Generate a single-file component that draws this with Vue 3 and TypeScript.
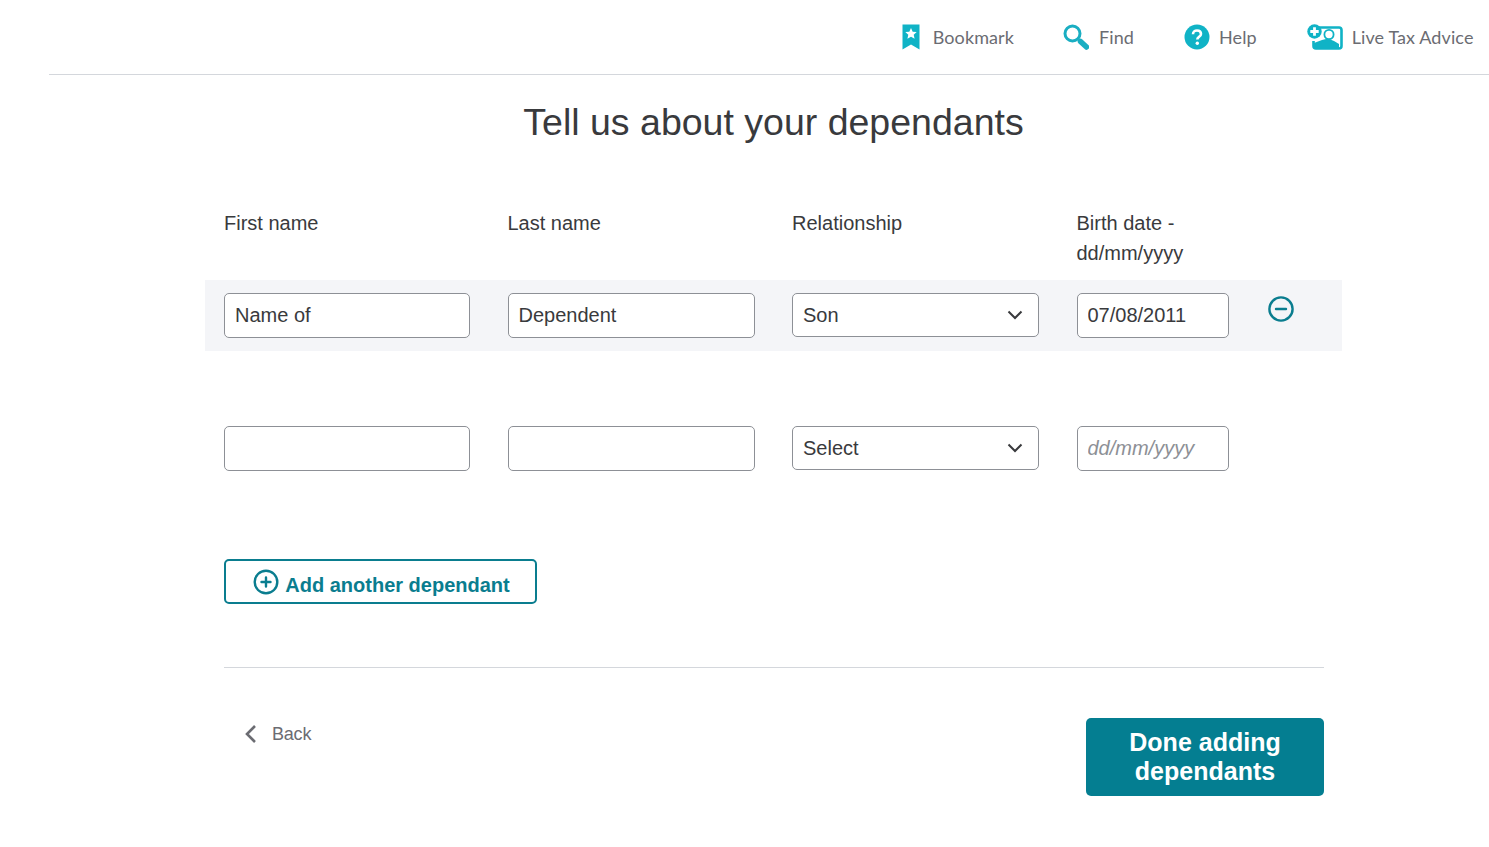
<script setup lang="ts">
import { ref } from 'vue'

const navItems = [
  { key: 'bookmark', label: 'Bookmark' },
  { key: 'find', label: 'Find' },
  { key: 'help', label: 'Help' },
  { key: 'live', label: 'Live Tax Advice' },
]

const relationships = ['Select', 'Son', 'Daughter', 'Other']

const dependants = ref([
  { first: 'Name of', last: 'Dependent', relationship: 'Son', birth: '07/08/2011' },
  { first: '', last: '', relationship: 'Select', birth: '' },
])
</script>

<template>
  <div class="page">
    <header class="topbar">
      <a v-for="item in navItems" :key="item.key" class="nav-item" :class="`nav-item--${item.key}`">
        <svg v-if="item.key === 'bookmark'" width="18" height="26" viewBox="0 0 18 26">
          <path d="M0.500 0.500h17v25l-8.500-5l-8.500 5z" fill="#10b3c6" />
          <path d="M9 4l1.700 3.700 4 .4-3 2.700.9 4L9 12.800l-3.600 2 .9-4-3-2.700 4-.4z" fill="#fff" />
        </svg>
        <svg v-else-if="item.key === 'find'" width="26" height="26" viewBox="0 0 26 26">
          <circle cx="9.500" cy="9.500" r="7.500" fill="none" stroke="#1aaec2" stroke-width="3" />
          <path d="M15.500 15.500l2 2" stroke="#1aaec2" stroke-width="3" />
          <path d="M17.500 17.500l6 5.500" stroke="#1aaec2" stroke-width="5.500" stroke-linecap="round" />
        </svg>
        <svg v-else-if="item.key === 'help'" width="26" height="26" viewBox="0 0 26 26">
          <circle cx="13" cy="13" r="12.500" fill="#10b3c6" />
          <path d="M9 10.200c0-2.300 1.800-3.700 4-3.700s4 1.300 4 3.400c0 2.900-3.700 2.900-3.700 5.600" fill="none" stroke="#fff" stroke-width="2.600" />
          <circle cx="13.300" cy="19.300" r="1.700" fill="#fff" />
        </svg>
        <svg v-else width="36" height="26" viewBox="0 0 36 26">
          <path d="M12 3.500h20a2.500 2.500 0 0 1 2.500 2.500v16a2.500 2.500 0 0 1-2.500 2.500H9a2.500 2.500 0 0 1-2.500-2.500v-5" fill="none" stroke="#10b3c6" stroke-width="2.600" />
          <path d="M7 25v-6l8-3 4-1h3l5 2 5 3v5z" fill="#10b3c6" />
          <circle cx="22" cy="10.500" r="4.600" fill="#fff" stroke="#10b3c6" stroke-width="1.800" />
          <circle cx="7.500" cy="7.500" r="7.200" fill="#10b3c6" />
          <path d="M7.500 3.300v8.400M3.300 7.500h8.400" stroke="#fff" stroke-width="2.800" />
        </svg>
        <span>{{ item.label }}</span>
      </a>
    </header>

    <main class="content">
      <h1 class="title">Tell us about your dependants</h1>

      <div class="columns labels">
        <span>First name</span>
        <span>Last name</span>
        <span>Relationship</span>
        <span>Birth date - dd/mm/yyyy</span>
      </div>

      <div
        v-for="(dep, i) in dependants"
        :key="i"
        class="columns dep-row"
        :class="{ 'dep-row--filled': i === 0 }"
      >
        <input v-model="dep.first" class="field" type="text" />
        <input v-model="dep.last" class="field" type="text" />
        <div class="select-wrap">
          <select v-model="dep.relationship" class="field field--select">
            <option v-for="r in relationships" :key="r" :value="r">{{ r }}</option>
          </select>
          <svg class="chevron" width="16" height="10" viewBox="0 0 16 10">
            <path d="M1.500 1.500L8 8l6.500-6.500" fill="none" stroke="#393a3d" stroke-width="2" />
          </svg>
        </div>
        <input v-model="dep.birth" class="field" type="text" placeholder="dd/mm/yyyy" />
        <button v-if="i === 0" class="remove" type="button" aria-label="Remove dependant">
          <svg width="26" height="26" viewBox="0 0 26 26">
            <circle cx="13" cy="13" r="11.600" fill="none" stroke="#0a7d8f" stroke-width="2.400" />
            <path d="M8 13h10" stroke="#0a7d8f" stroke-width="2.400" stroke-linecap="round" />
          </svg>
        </button>
      </div>

      <div class="inner">
        <button class="add" type="button">
          <svg width="26" height="26" viewBox="0 0 26 26">
            <circle cx="13" cy="13" r="11.300" fill="none" stroke="#0a7d8f" stroke-width="2.400" />
            <path d="M8.500 13h9M13 8.500v9" stroke="#0a7d8f" stroke-width="2.400" stroke-linecap="round" />
          </svg>
          <span>Add another dependant</span>
        </button>

        <div class="footer">
          <a class="back">
            <svg width="13" height="20" viewBox="0 0 13 20">
              <path d="M11 2L3 10l8 8" fill="none" stroke="#6b6c72" stroke-width="2.600" />
            </svg>
            <span>Back</span>
          </a>
          <button class="done" type="button">Done adding dependants</button>
        </div>
      </div>
    </main>
  </div>
</template>

<style>
body {
  background: #fff;
}
</style>

<style scoped>
.page {
  font-family: 'Liberation Sans', Arial, sans-serif;
  color: #393a3d;
  height: 847px;
  overflow: hidden;
}

.topbar {
  height: 74px;
  margin-left: 49px;
  border-bottom: 1px solid #d4d7dc;
  display: flex;
  justify-content: flex-end;
  align-items: center;
  gap: 50px;
  padding-right: 15.500px;
  box-sizing: content-box;
  font-family: Lato, sans-serif;
  font-size: 18px;
  letter-spacing: 0.1px;
  color: #6b6c72;
}

.nav-item {
  display: flex;
  align-items: center;
  gap: 10px;
}

.nav-item--bookmark {
  gap: 13px;
  margin-right: -1px;
}

.nav-item--help {
  gap: 9px;
}

.nav-item--live {
  gap: 9px;
}

.content {
  width: 1137px;
  margin-left: 205px;
}

.title {
  margin: 0;
  padding-top: 22px;
  height: 111px;
  box-sizing: border-box;
  text-align: center;
  font-size: 37.500px;
  line-height: 50px;
  font-weight: 400;
  color: #393a3d;
}

.columns {
  display: grid;
  grid-template-columns: 246px 247px 247px 152px 40px;
  column-gap: 37.500px;
  padding-left: 19px;
}

.labels {
  height: 94px;
  padding-top: 22px;
  box-sizing: border-box;
  font-size: 20px;
  line-height: 30px;
}

.dep-row {
  height: 71px;
  padding-top: 13px;
  box-sizing: border-box;
  margin-bottom: 62px;
  align-items: start;
}

.dep-row--filled {
  background: #f4f5f8;
}

.field {
  width: 100%;
  height: 45px;
  box-sizing: border-box;
  padding: 0 10px;
  border: 1px solid #8d9096;
  border-radius: 5px;
  background: #fff;
  font: 20px 'Liberation Sans', Arial, sans-serif;
  color: #393a3d;
  outline: none;
}

.field::placeholder {
  color: #8d9096;
  font-style: italic;
  opacity: 1;
}

.select-wrap {
  position: relative;
}

.field--select {
  display: block;
  height: 44px;
  appearance: none;
  padding-right: 36px;
}

.chevron {
  position: absolute;
  right: 16px;
  top: 17px;
  pointer-events: none;
}

.remove {
  margin: 3px 0 0 2px;
  padding: 0;
  border: 0;
  background: none;
  width: 26px;
  height: 26px;
}

.inner {
  width: 1100px;
  margin-left: 19px;
}

.add {
  display: flex;
  align-items: center;
  justify-content: center;
  gap: 6px;
  width: 313px;
  height: 45px;
  margin-top: 75px;
  padding: 0 0 0 2px;
  box-sizing: border-box;
  border: 2px solid #0a7d8f;
  border-radius: 5px;
  background: #fff;
  font: 700 20px 'Liberation Sans', Arial, sans-serif;
  color: #0a7d8f;
}

.add span {
  position: relative;
  top: 4px;
}

.footer {
  margin-top: 63px;
  padding-top: 50px;
  border-top: 1px solid #d4d7dc;
  display: flex;
  justify-content: space-between;
  align-items: flex-start;
}

.back {
  display: flex;
  align-items: center;
  gap: 15px;
  margin: 6px 0 0 20px;
  font-size: 18px;
  line-height: 20px;
  letter-spacing: -0.2px;
  color: #6b6c72;
}

.done {
  width: 238px;
  height: 78px;
  padding: 0 20px;
  border: 0;
  border-radius: 5px;
  background: #047e91;
  color: #fff;
  font: 700 25px/29px 'Liberation Sans', Arial, sans-serif;
}
</style>
